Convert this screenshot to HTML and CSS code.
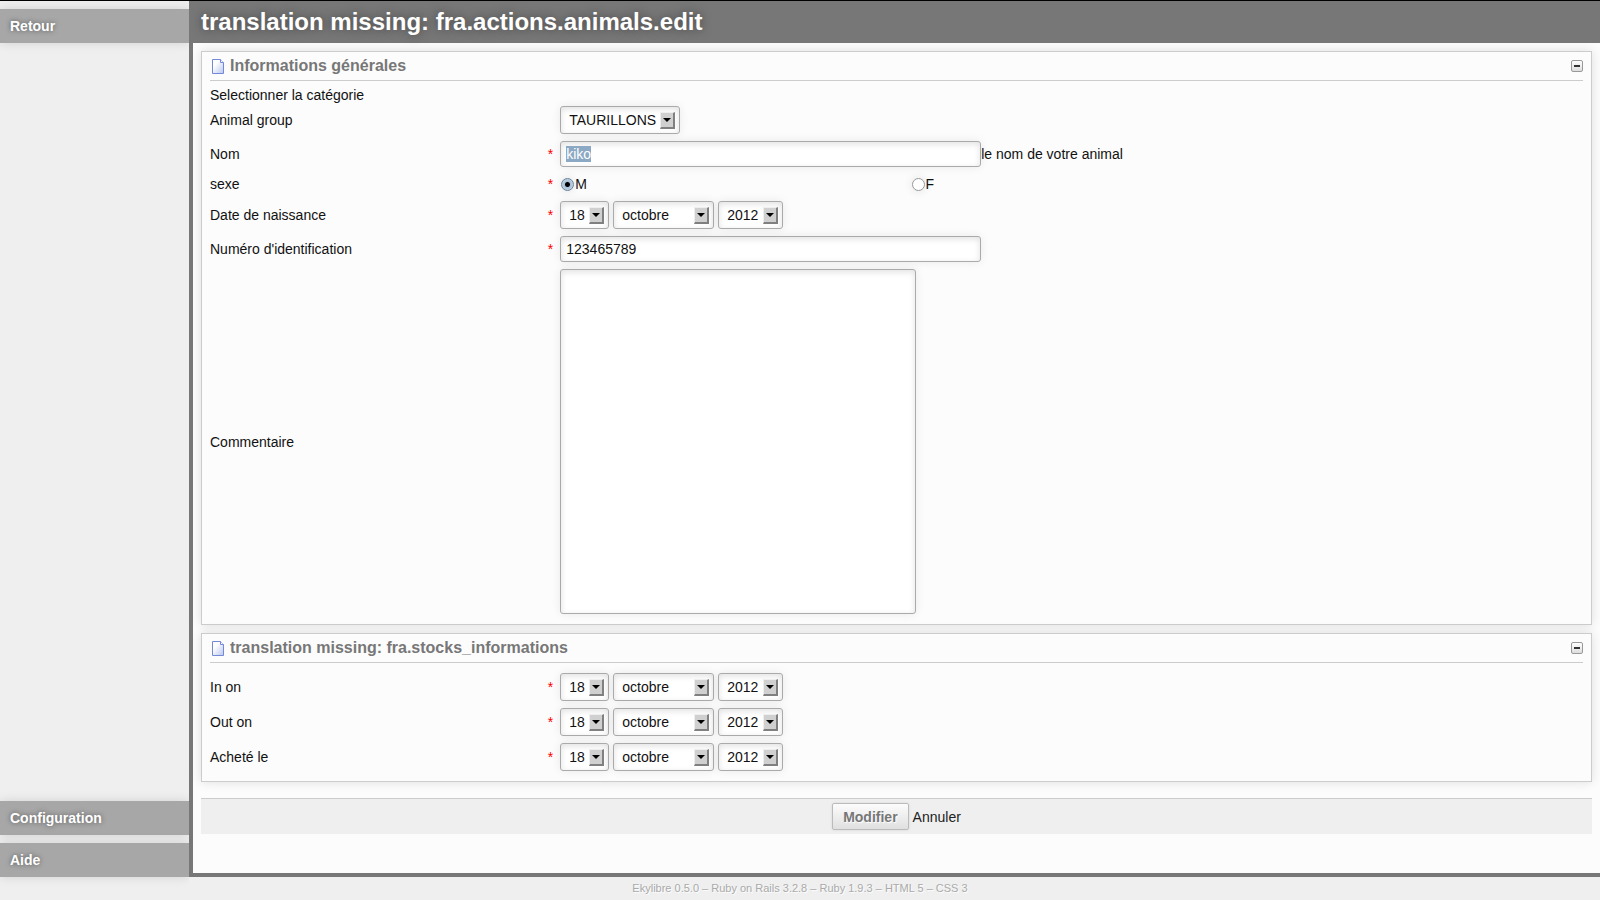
FILE: index.html
```html
<!DOCTYPE html>
<html lang="fr">
<head>
<meta charset="utf-8">
<title>Ekylibre</title>
<link rel="stylesheet" href="styles.css">
</head>
<body>
<div class="layout">
  <nav class="side">
    <a class="side-link" href="#retour">Retour</a>
    <a class="side-link side-bottom" href="#configuration">Configuration</a>
    <a class="side-link" href="#aide">Aide</a>
  </nav>
  <main class="main">
    <h1 class="title">translation missing: fra.actions.animals.edit</h1>
    <form class="form">
      <section class="panel">
        <header class="panel-head">
          <svg class="doc" width="12" height="15" viewBox="0 0 12 15"><defs><linearGradient id="g1" x1="0" y1="0" x2="1" y2="1"><stop offset=".3" stop-color="#fff"/><stop offset="1" stop-color="#b9c6ee"/></linearGradient></defs><path d="M.5.5H8.500L11.500 3.500V14.500H.5Z" fill="url(#g1)" stroke="#7488d8"/><path d="M8.500.5V3.500H11.500" fill="#fff" stroke="#7488d8"/></svg>
          <h2 class="panel-title">Informations générales</h2>
          <button class="toggle" type="button" aria-label="Replier"></button>
        </header>
        <p class="intro">Selectionner la catégorie</p>
        <div class="fields">
          <div class="row">
            <label class="label" for="group">Animal group</label>
            <div class="control"><span class="select"><select class="group" id="group"><option>TAURILLONS</option></select></span></div>
          </div>
          <div class="row">
            <label class="label required" for="name">Nom</label>
            <div class="control"><input class="text" id="name" type="text" value="kiko">le nom de votre animal</div>
          </div>
          <div class="row" role="radiogroup" aria-labelledby="sex">
            <span class="label required" id="sex">sexe</span>
            <label class="choice"><input class="radio" type="radio" name="sex" checked>M</label>
            <label class="choice"><input class="radio" type="radio" name="sex">F</label>
          </div>
          <div class="row">
            <label class="label required" for="born">Date de naissance</label>
            <div class="control dates">
              <span class="select"><select class="day" id="born"><option>18</option></select></span>
              <span class="select"><select class="month" aria-label="Mois"><option>octobre</option></select></span>
              <span class="select"><select class="year" aria-label="Année"><option>2012</option></select></span>
            </div>
          </div>
          <div class="row">
            <label class="label required" for="number">Numéro d'identification</label>
            <div class="control"><input class="text" id="number" type="text" value="123465789"></div>
          </div>
          <div class="row">
            <label class="label" for="comment">Commentaire</label>
            <div class="control"><textarea class="comment" id="comment"></textarea></div>
          </div>
        </div>
      </section>
      <section class="panel">
        <header class="panel-head">
          <svg class="doc" width="12" height="15" viewBox="0 0 12 15"><path d="M.5.5H8.500L11.500 3.500V14.500H.5Z" fill="url(#g1)" stroke="#7488d8"/><path d="M8.500.5V3.500H11.500" fill="#fff" stroke="#7488d8"/></svg>
          <h2 class="panel-title">translation missing: fra.stocks_informations</h2>
          <button class="toggle" type="button" aria-label="Replier"></button>
        </header>
        <div class="fields fields-only">
          <div class="row">
            <label class="label required" for="in">In on</label>
            <div class="control dates">
              <span class="select"><select class="day" id="in"><option>18</option></select></span>
              <span class="select"><select class="month" aria-label="Mois"><option>octobre</option></select></span>
              <span class="select"><select class="year" aria-label="Année"><option>2012</option></select></span>
            </div>
          </div>
          <div class="row">
            <label class="label required" for="out">Out on</label>
            <div class="control dates">
              <span class="select"><select class="day" id="out"><option>18</option></select></span>
              <span class="select"><select class="month" aria-label="Mois"><option>octobre</option></select></span>
              <span class="select"><select class="year" aria-label="Année"><option>2012</option></select></span>
            </div>
          </div>
          <div class="row">
            <label class="label required" for="bought">Acheté le</label>
            <div class="control dates">
              <span class="select"><select class="day" id="bought"><option>18</option></select></span>
              <span class="select"><select class="month" aria-label="Mois"><option>octobre</option></select></span>
              <span class="select"><select class="year" aria-label="Année"><option>2012</option></select></span>
            </div>
          </div>
        </div>
      </section>
      <div class="actions">
        <button class="submit" type="submit">Modifier</button>
        <a class="cancel" href="#annuler">Annuler</a>
      </div>
    </form>
  </main>
</div>
<footer class="footer">Ekylibre 0.5.0 – Ruby on Rails 3.2.8 – Ruby 1.9.3 – HTML 5 – CSS 3</footer>
<script src="script.js"></script>
</body>
</html>
```
FILE: styles.css
```css
*,
*::before {
  box-sizing: border-box;
}

body {
  margin: 0;
  min-height: 100vh;
  display: flex;
  flex-direction: column;
  border-top: 1px solid #000;
  background: #efefef;
  color: #111;
  font: 14px/18px "Liberation Sans", Arial, sans-serif;
}

.layout {
  flex: 1;
  display: flex;
}

.side {
  width: 189px;
  flex: none;
  display: flex;
  flex-direction: column;
  gap: 8px;
  padding-top: 8px;
  overflow-x: clip;
}

.side-link {
  padding: 8px 10px;
  background: #a7a7a7;
  box-shadow: 0 0 10px rgba(0, 0, 0, 0.12);
  color: #fff;
  font-weight: bold;
  text-decoration: none;
  text-shadow: 0 0 5px #555;
}

.side-bottom {
  margin-top: auto;
}

.main {
  flex: 1;
  min-width: 0;
  border-left: 4px solid #777;
  border-bottom: 4px solid #777;
  background: #fcfcfc;
}

.title {
  margin: 0;
  padding: 6px 8px;
  background: #777;
  color: #fff;
  font-size: 24px;
  line-height: 30px;
  text-shadow: 0 0 10px #444;
}

.form {
  display: flex;
  flex-direction: column;
  gap: 8px;
  padding: 8px;
}

.panel {
  padding: 0 8px 10px;
  border: 1px solid #ccc;
  background: #fcfcfc;
  box-shadow: 0 0 10px rgba(0, 0, 0, 0.12);
}

.panel-head {
  display: flex;
  align-items: center;
  height: 29px;
  padding-left: 2px;
  border-bottom: 1px solid #ccc;
}

.doc {
  margin-right: 6px;
}

.panel-title {
  flex: 1;
  margin: 0;
  color: #777;
  font-size: 16px;
}

.toggle {
  display: flex;
  align-items: center;
  justify-content: center;
  width: 12px;
  height: 12px;
  padding: 0;
  border: 1px solid #999;
  border-radius: 2px;
  background: linear-gradient(#fff, #ddd);
}

.toggle::before {
  content: "";
  width: 6px;
  height: 2px;
  background: #333;
}

.intro {
  margin: 5px 0 2px;
}

.fields {
  display: flex;
  flex-direction: column;
  gap: 7px;
}

.fields-only {
  padding-top: 10px;
}

.row {
  display: grid;
  grid-template-columns: 25% 25% 1fr;
  column-gap: 7px;
  align-items: center;
}

.label {
  display: flex;
  justify-content: space-between;
}

.required::after {
  content: "*";
  color: #f00;
}

.control {
  grid-column: 2 / -1;
  display: flex;
  align-items: center;
}

.dates {
  gap: 4px;
}

.text,
.comment,
.select select {
  margin: 0;
  border: 1px solid #aaa;
  border-radius: 3px;
  outline: 0;
  background: #fff;
  box-shadow: 0 0 10px rgba(0, 0, 0, 0.08), inset 0 2px 6px rgba(0, 0, 0, 0.12);
  color: #111;
  font: inherit;
}

.text {
  width: 421px;
  height: 26px;
  padding: 0 5px;
}

.text::selection {
  background: #8ba8c4;
  color: #fff;
}

.comment {
  width: 356px;
  height: 345px;
  resize: none;
}

.select {
  position: relative;
  display: flex;
}

.select select {
  appearance: none;
  height: 28px;
  padding: 0 8px;
}

.select::before {
  content: "";
  position: absolute;
  z-index: 1;
  top: 6px;
  right: 5px;
  width: 15px;
  height: 17px;
  border: 1px solid #eee;
  border-right: 2px solid #808080;
  border-bottom: 2px solid #808080;
  background: #d0d0d0;
  pointer-events: none;
}

.select::after {
  content: "";
  position: absolute;
  z-index: 2;
  top: 12px;
  right: 9px;
  border: 4px solid transparent;
  border-top-color: #000;
  border-bottom: 0;
  pointer-events: none;
}

.select .group {
  width: 120px;
}

.select .day {
  width: 49px;
}

.select .month {
  width: 101px;
}

.select .year {
  width: 65px;
}

.choice {
  display: flex;
  align-items: center;
  gap: 1px;
  height: 20px;
  padding-left: 1px;
}

.radio {
  appearance: none;
  width: 13px;
  height: 13px;
  margin: 0;
  border: 1px solid #999;
  border-radius: 50%;
  background: #fff;
  box-shadow: 0 0 10px rgba(0, 0, 0, 0.12);
}

.radio:checked {
  border-color: #66809a;
  background: radial-gradient(circle, #000 0 2px, #a9c0d8 3px, #c5d5e5 6px);
}

.actions {
  display: flex;
  justify-content: center;
  align-items: center;
  gap: 4px;
  height: 36px;
  margin-top: 8px;
  border-top: 1px solid #ccc;
  background: #efefef;
}

.submit {
  height: 27px;
  padding: 0 10px;
  border: 1px solid #bbb;
  border-radius: 2px;
  background: linear-gradient(#fcfcfc, #e0e0e0);
  box-shadow: 0 0 3px rgba(0, 0, 0, 0.1);
  color: #777;
  font: bold 14px/18px "Liberation Sans", Arial, sans-serif;
  text-shadow: 1px 1px 1px #fff;
}

.cancel {
  color: #222;
  text-decoration: none;
}

.footer {
  height: 23px;
  color: #aaa;
  font-size: 11px;
  line-height: 22px;
  text-align: center;
  text-shadow: 1px 1px 1px #fff;
}
```
FILE: script.js
```js
const nameField = document.getElementById("name");
nameField.focus();
nameField.select();
```
